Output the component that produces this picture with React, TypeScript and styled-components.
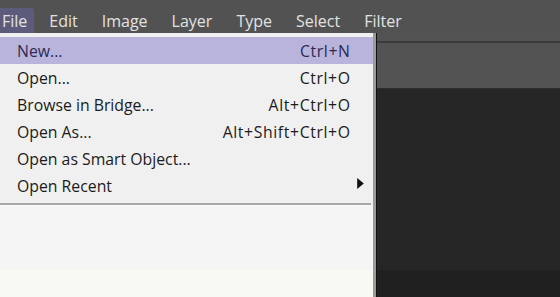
import styled, { createGlobalStyle } from 'styled-components';

type MenuItem = {
  label: string;
  shortcut?: string;
  submenu?: boolean;
  active?: boolean;
};

const topMenus = ['File', 'Edit', 'Image', 'Layer', 'Type', 'Select', 'Filter'];

const fileItems: MenuItem[] = [
  { label: 'New...', shortcut: 'Ctrl+N', active: true },
  { label: 'Open...', shortcut: 'Ctrl+O' },
  { label: 'Browse in Bridge...', shortcut: 'Alt+Ctrl+O' },
  { label: 'Open As...', shortcut: 'Alt+Shift+Ctrl+O' },
  { label: 'Open as Smart Object...' },
  { label: 'Open Recent', submenu: true },
];

const App = () => {
  return (
    <>
      <GlobalStyle />
      <Window>
        <MenuBar>
          {topMenus.map((name, index) => (
            <TopItem key={name} open={index === 0}>
              {name}
            </TopItem>
          ))}
        </MenuBar>
        <Workspace>
          <OptionsStrip />
          <OptionsBar />
          <Canvas />
          <CanvasFooter />
          <Dropdown>
            <DropdownList>
              {fileItems.map((item) => (
                <DropdownItem key={item.label} active={!!item.active}>
                  <ItemLabel>{item.label}</ItemLabel>
                  {item.shortcut && <ItemShortcut>{item.shortcut}</ItemShortcut>}
                  {item.submenu && (
                    <SubmenuArrow viewBox="0 0 6 10">
                      <path d="M0 0 L6 5 L0 10 Z" fill="#111" />
                    </SubmenuArrow>
                  )}
                </DropdownItem>
              ))}
            </DropdownList>
            <Separator />
            <DropdownRest />
            <DropdownFooter />
          </Dropdown>
        </Workspace>
      </Window>
    </>
  );
};

const GlobalStyle = createGlobalStyle`
  html, body {
    margin: 0;
    padding: 0;
    background: #262626;
    overflow: hidden;
  }
`;

const Window = styled.div`
  width: 560px;
  height: 297px;
  display: flex;
  flex-direction: column;
  font-family: 'Open Sans', 'Noto Sans', sans-serif;
`;

const MenuBar = styled.div`
  height: 33px;
  background: #525252;
  display: flex;
  align-items: flex-end;
`;

const TopItem = styled.div<{ open: boolean }>`
  height: 25px;
  box-sizing: border-box;
  padding: 1px ${({ open }) => (open ? '7px' : '0')} 0
    ${({ open }) => (open ? '2px' : '0')};
  margin-right: ${({ open }) => (open ? '15px' : '24px')};
  line-height: 24px;
  background: ${({ open }) => (open ? '#5d5b7c' : 'transparent')};
  border-radius: 0 3px 0 0;
  color: #e2e2e2;
  font-size: 16px;
`;

const Workspace = styled.div`
  position: relative;
  flex: 1;
  display: flex;
  flex-direction: column;
`;

const OptionsStrip = styled.div`
  height: 8px;
  background: #535353;
  border-bottom: 2px solid #3a3a3a;
`;

const OptionsBar = styled.div`
  height: 45px;
  background: #535353;
  border-bottom: 1px solid #2e2e2e;
`;

const Canvas = styled.div`
  flex: 1;
  background: #262626;
`;

const CanvasFooter = styled.div`
  height: 27px;
  background: #202020;
`;

const Dropdown = styled.div`
  position: absolute;
  top: 0;
  left: 0;
  bottom: 0;
  width: 373px;
  background: #f0f0f0;
  border-right: 3px solid #9a9a9a;
  box-shadow: 1px 0 0 #111;
  display: flex;
  flex-direction: column;
`;

const DropdownList = styled.div`
  padding-top: 4px;
  display: flex;
  flex-direction: column;
`;

const DropdownItem = styled.div<{ active: boolean }>`
  height: 27px;
  display: flex;
  align-items: center;
  padding: 0 23px 0 17px;
  background: ${({ active }) => (active ? '#b8b4db' : 'transparent')};
  color: ${({ active }) => (active ? '#2e2a55' : '#1b1b1b')};
  font-size: 15.8px;
  position: relative;
`;

const ItemLabel = styled.span`
  flex: 1;
  white-space: nowrap;
`;

const ItemShortcut = styled.span`
  letter-spacing: 0.6px;
  margin-right: -0.6px;
  white-space: nowrap;
`;

const SubmenuArrow = styled.svg`
  position: absolute;
  right: 9px;
  top: 6px;
  width: 7px;
  height: 11px;
`;

const Separator = styled.div`
  margin-top: 4px;
  width: 371px;
  height: 2px;
  background: #a8a8a8;
  border-bottom: 1px solid #fbfbfb;
`;

const DropdownRest = styled.div`
  flex: 1;
  background: #f5f5f5;
`;

const DropdownFooter = styled.div`
  height: 27px;
  background: #f9f9f3;
`;

export default App;
